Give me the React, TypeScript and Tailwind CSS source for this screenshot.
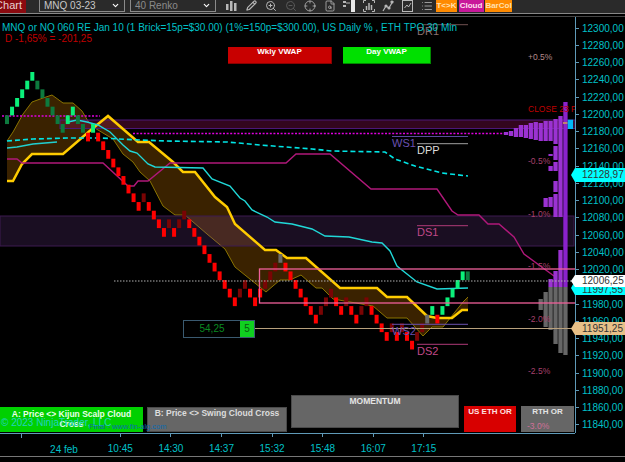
import { ChevronDown, Pencil, ZoomIn, ZoomOut, Crosshair, FileSearch, List } from "lucide-react";

// one entry per renko brick: level, kind (b bright green, d dim green, r red, m dim red, g gray)
const bricks =
  "5d 4b 3b 2b 1b 0b 1d 2d 3d 4d 5d 6d 5b 4b 5d 6d 7r 6b 7r 8r 9r 10r 11r 12r 13r 14r 15r 14m 15r 16r 17r 18r 17m 18r 17m 16m 17r 18r 19r 20r 21r 22r 23r 24r 25r 26r 25m 24m 25r 26r 25r 24m 23m 22m 21g 22r 23r 24r 25r 26r 27r 28r 27m 26m 25m 26r 27r 26m 27r 28r 27m 26m 27r 28r 29r 30r 29m 30r 29m 30r 31r 30m 29m 28g 27b 28r 27b 26b 25b 24b 23b 23d".split(
    " "
  );

const brickColors: Record<string, string> = {
  b: "#0bf07a",
  d: "#0d7a3e",
  r: "#ff0000",
  m: "#7a0404",
  g: "#6a6a6a",
};

const thinCloud = "7,142 13,133 23,115 32,103 43,99 52,96 63,104 73,104 82,112 88,122 93,128 113,140 123,155 133,163 140,173 150,182 163,207 175,216 185,216 207,235 225,250 235,268 266,293 280,281 290,281 301,276 316,289 322,289 333,300 373,307 387,319 407,319 423,337 432,328 443,328 463,303 468,298";
const thickCloud = "7,182 13,182 22,165 32,155 63,155 92,130 108,117 138,143 149,143 173,163 183,173 195,173 215,198 227,208 235,225 265,251 276,251 287,259 306,259 340,289 377,289 387,298 407,298 427,317 437,319 452,319 462,311 468,311";
const cloudFill = thinCloud + " " + thickCloud.split(" ").reverse().join(" ");

const cyanA = "7,149 17,148 33,145 57,143";
const cyanB = "68,123 77,121 87,123 98,126 110,133 123,146 130,152 137,154 148,165 155,168 203,169 212,180 230,187 240,199 245,202 252,211 267,218 275,223 292,225 312,230 325,237 349,238 372,243 382,244 390,252 397,267 417,283 437,290 468,289";
const cyanDash = "7,142 33,140 67,139 100,139 140,141 167,142 227,143 260,146 312,150 332,152 385,153 395,160 415,167 442,174 468,177";
const magenta = "7,160 17,160 22,164 103,164 128,187 134,187 138,182 148,182 170,164 286,164 296,155 330,155 371,190 437,190 452,212 458,216 479,216 488,225 499,225 514,238 524,255 554,277";

// profile columns, k counted from the right edge, each with its y ranges
const purpleCols: [number, number, number][] = [
  [0, 103, 288], [1, 117, 218], [1, 251, 288], [2, 120, 145], [2, 147, 161], [2, 163, 172], [2, 182, 193], [2, 195, 218], [2, 272, 288],
  [3, 122, 142], [3, 155, 157], [3, 167, 172], [3, 198, 208], [3, 280, 288], [4, 122, 142], [4, 199, 208], [5, 124, 142], [6, 123, 141],
  [7, 124, 140], [8, 126, 139], [9, 126, 138], [10, 129, 138], [11, 132, 137], [12, 133, 136],
];
const grayCols: [number, number, number][] = [
  [0, 288, 356], [1, 288, 354], [2, 288, 345], [3, 288, 331], [4, 293, 328], [5, 300, 311],
];

const pctLabels: [string, number, string][] = [
  ["+0.5%", 61, "#b58a8a"],
  ["-0.5%", 165, "#a8406c"],
  ["-1.0%", 218, "#a8406c"],
  ["-1.5%", 270, "#a8406c"],
  ["-2.0%", 323, "#a8406c"],
  ["-2.5%", 375, "#a8406c"],
];

const prices = ["12300,00", "12280,00", "12260,00", "12240,00", "12220,00", "12200,00", "12180,00", "12160,00", "12140,00", "12120,00", "12100,00", "12080,00", "12060,00", "12040,00", "12020,00", "12000,00", "11980,00", "11960,00", "11940,00", "11920,00", "11900,00", "11880,00", "11860,00", "11840,00"];

const times = ["14:30", "14:37", "15:32", "15:48", "16:07", "17:15"];

function ChartDrawing() {
  return (
    <svg className="absolute inset-0" width={575} height={416} viewBox="0 18 575 416">
      <polygon points={cloudFill} fill="#3a2200" />
      <polyline points={thinCloud} fill="none" stroke="#8a7400" strokeWidth={1} />

      <rect x={60} y={121} width={515} height={8.5} fill="#80104a" fillOpacity={0.4} stroke="#4c1878" />
      <rect x={0} y={217} width={574} height={30} fill="#8246aa" fillOpacity={0.2} stroke="#3d1a50" />

      <line x1={2} x2={100} y1={117} y2={117} stroke="#e000e0" strokeWidth={1.5} strokeDasharray="2 1.6" />
      <line x1={133} x2={505} y1={134.5} y2={134.5} stroke="#e000e0" strokeWidth={1.5} strokeDasharray="2 1.6" />

      <polyline points={thickCloud} fill="none" stroke="#ffcc00" strokeWidth={2.5} />
      <polyline points={magenta} fill="none" stroke="#b0187a" strokeWidth={1.4} />
      <polyline points={cyanA} fill="none" stroke="#20d0d0" strokeWidth={1.4} />
      <polyline points={cyanB} fill="none" stroke="#20d8d8" strokeWidth={1.4} />
      <polyline points={cyanDash} fill="none" stroke="#00e5e5" strokeWidth={1.6} strokeDasharray="5 3" />

      {bricks.map((b, i) => {
        const level = parseInt(b);
        const kind = b[b.length - 1];
        return (
          <rect key={i} x={5 + 5.063 * i} y={73 + 8.67 * level} width={4} height={8.7} fill={brickColors[kind]} />
        );
      })}

      {purpleCols.map(([k, y1, y2], i) => (
        <rect key={i} x={563.3 - 4.95 * k} y={y1} width={4.3} height={y2 - y1} fill={k === 0 ? "#8a22cc" : "#9b32d2"} />
      ))}
      {grayCols.map(([k, y1, y2], i) => (
        <rect key={i} x={563.3 - 4.95 * k} y={y1} width={4.3} height={y2 - y1} fill="#666666" />
      ))}
      <rect x={563} y={123} width={4.5} height={2} fill="#c08070" />
      <rect x={567.7} y={120.7} width={5.4} height={9.3} fill="#00b8f8" />

      <rect x={259.5} y={270} width={320} height={34} fill="none" stroke="#f0609a" strokeWidth={1.3} />
      <line x1={114} x2={575} y1={282} y2={282} stroke="#b0b0b0" strokeDasharray="1.5 1.5" />
      <line x1={255} x2={575} y1={329.5} y2={329.5} stroke="#b8a07c" />

      <line x1={422} x2={468} y1={25.7} y2={25.7} stroke="#705050" />
      <line x1={392} x2={468} y1={137.5} y2={137.5} stroke="#5a4aa0" />
      <line x1={417} x2={468} y1={144.7} y2={144.7} stroke="#a0a0a0" />
      <line x1={417} x2={468} y1={226.7} y2={226.7} stroke="#b03a78" />
      <line x1={392} x2={468} y1={325.3} y2={325.3} stroke="#6a50b0" />
      <line x1={417} x2={468} y1={345.3} y2={345.3} stroke="#b03a78" />

      <g fontSize={11}>
        <text x={417} y={36} fill="#8a7070">DR1</text>
        <text x={392} y={148} fill="#6a50b0">WS1</text>
        <text x={417} y={155} fill="#dddddd">DPP</text>
        <text x={417} y={237} fill="#c04888">DS1</text>
        <text x={392} y={336} fill="#6a50b0">WS2</text>
        <text x={417} y={356} fill="#c04888">DS2</text>
      </g>
      <g fontSize={8.5}>
        {pctLabels.map(([t, y, c]) => (
          <text key={t} x={528} y={y} fill={c}>{t}</text>
        ))}
        <text x={528} y={113} fill="#c00000">CLOSE 23 Feb</text>
      </g>
    </svg>
  );
}

function ToolIcon({ children }: { children: React.ReactNode }) {
  return <div className="flex h-[13px] w-[19.5px] shrink-0 items-start justify-start overflow-hidden text-[#b8b8b8]">{children}</div>;
}

function Toolbar() {
  return (
    <div className="flex h-[13px] shrink-0 items-start overflow-hidden bg-[#2a2a2a]">
      <div className="flex h-[13px] w-[26px] shrink-0 justify-end overflow-hidden whitespace-nowrap bg-[#8a0a10] pr-[4px] text-[11px] leading-[11px] text-[#e8d0d0]">Chart</div>
      <div className="ml-[13px] flex h-[12px] w-[86px] shrink-0 items-center justify-between border-x border-b border-[#8a8a8a] pl-1 pr-1 text-[10px] text-[#c8c8c8]">
        MNQ 03-23
        <ChevronDown size={9} strokeWidth={3} className="text-white" />
      </div>
      <div className="ml-[5px] flex h-[12px] w-[86px] shrink-0 items-center justify-between border-x border-b border-[#8a8a8a] pl-1 pr-1 text-[10px] text-[#8a8a8a]">
        40 Renko
        <ChevronDown size={9} strokeWidth={3} className="text-white" />
      </div>
      <div className="ml-[10px] flex">
        <ToolIcon>
          <svg width="11" height="12" viewBox="0 0 11 12" fill="currentColor">
            <rect x="0" y="4" width="2.5" height="6" />
            <rect x="4" y="1" width="2.5" height="10" />
            <rect x="8" y="3" width="2.5" height="8" />
          </svg>
        </ToolIcon>
        <ToolIcon><Pencil size={11} strokeWidth={2.5} /></ToolIcon>
        <ToolIcon><ZoomIn size={12} strokeWidth={2} /></ToolIcon>
        <ToolIcon><ZoomOut size={12} strokeWidth={2} className="text-[#5a5a5a]" /></ToolIcon>
        <ToolIcon><Crosshair size={12} strokeWidth={1.6} /></ToolIcon>
        <ToolIcon><FileSearch size={12} strokeWidth={1.6} /></ToolIcon>
        <ToolIcon>
          <svg width="12" height="12" viewBox="0 0 12 12" fill="currentColor">
            <rect x="0" y="1" width="3" height="2" />
            <rect x="0" y="5" width="3" height="2" />
            <rect x="3" y="2.5" width="4" height="1" />
            <rect x="8" y="0" width="4" height="12" fill="#e8e8e8" />
          </svg>
        </ToolIcon>
        <ToolIcon>
          <svg width="12" height="12" viewBox="0 0 12 12" fill="none" stroke="currentColor">
            <path d="M.5 3V.5H3M9 .5h2.5V3M.5 9v2.5H3M9 11.5h2.5V9" />
            <path d="M3.5 10V6M6 10V3M8.5 10V5" strokeWidth="1.5" />
          </svg>
        </ToolIcon>
        <ToolIcon>
          <svg width="12" height="12" viewBox="0 0 12 12" fill="none" stroke="currentColor" strokeWidth="1.2">
            <path d="M1 11 4 6l3 2 4-7" />
            <circle cx="4" cy="6" r="1" fill="currentColor" />
            <circle cx="7" cy="8" r="1" fill="currentColor" />
            <circle cx="10" cy="2" r="1" fill="currentColor" />
          </svg>
        </ToolIcon>
        <ToolIcon>
          <svg width="11" height="12" viewBox="0 0 11 12" fill="none" stroke="currentColor">
            <rect x=".5" y=".5" width="10" height="11" />
            <path d="M2.5 8 5 5l1.5 2L9 3" />
          </svg>
        </ToolIcon>
        <ToolIcon><List size={12} strokeWidth={1.6} /></ToolIcon>
      </div>
      <div className="ml-[-4.5px] flex h-[12px] gap-[1.5px] text-[8px] font-bold leading-[12px]">
        <div className="w-[21px] bg-[#ff8a00] text-center text-[#ffe0b0]">T&lt;&gt;K</div>
        <div className="w-[25px] bg-[#c8189a] text-center text-[#ffe0f0]">Cloud</div>
        <div className="w-[27px] bg-[#ff8a00] text-center text-[#ffe0b0]">BarCol</div>
      </div>
    </div>
  );
}

function ChartPanel() {
  return (
    <div className="relative h-[416px] w-[575px] shrink-0 overflow-hidden">
      <ChartDrawing />

      <div className="absolute left-[2px] top-[6px] flex flex-col gap-[1px] whitespace-nowrap text-[10px] leading-[10px]">
        <span className="text-[#00c0c8]">MNQ or NQ 060 RE Jan 10 (1 Brick=15p=$30.00) (1%=150p=$300.00), US Daily % , ETH TPO 30 Min</span>
        <span className="pl-[3px] text-[#c00000]">D -1,65% = -201,25</span>
      </div>

      <div className="absolute left-[228px] top-[30px] h-[17px] w-[104px] border-b border-r border-[#8a0000] bg-[#c80000] text-center text-[8px] font-bold leading-[10px] text-white">Wkly VWAP</div>
      <div className="absolute left-[343px] top-[30px] h-[17px] w-[88px] border-b border-r border-[#008a00] bg-[#00e000] text-center text-[8px] font-bold leading-[10px] text-white">Day VWAP</div>

      <div className="absolute left-[183px] top-[303px] flex h-[18px] w-[72px] border border-[#3a5a70]">
        <div className="flex-1 text-center text-[10px] leading-[16px] text-[#0a8a20]">54,25</div>
        <div className="w-[14px] bg-[#10d020] text-center text-[10px] leading-[16px] text-[#0a5a10]">5</div>
      </div>

      <div className="absolute left-0 top-[390px] h-[25px] w-[143px] bg-[#00d000] px-2 pt-[1.5px] text-center text-[8.5px] font-bold leading-[10.5px] text-[#e8ffe8]">A: Price &lt;&gt; Kijun Scalp Cloud Cross</div>
      <div className="absolute left-[147px] top-[390px] h-[25px] w-[140px] border border-[#4a4a4a] bg-[#666666] text-center text-[8.5px] font-bold leading-[10px] text-[#dddddd]">B: Price &lt;&gt; Swing Cloud Cross</div>
      <div className="absolute left-[291px] top-[378px] h-[33px] w-[168px] border border-[#4a4a4a] bg-[#666666] text-center text-[8.5px] font-bold leading-[10px] text-[#e4e4e4]">MOMENTUM</div>
      <div className="absolute left-[464px] top-[389px] h-[26px] w-[52px] bg-[#d80000] pt-[1px] text-center text-[8px] font-bold leading-[10px] text-[#ffe0e0]">US ETH OR</div>
      <div className="absolute left-[521px] top-[389px] h-[26px] w-[53px] bg-[#666666] pt-[1px] text-center text-[8px] font-bold leading-[10px] text-[#e4e4e4]">
        RTH OR
        <div className="pl-[6px] pt-[4px] text-left text-[8.5px] font-normal text-[#d07098]">-3.0%</div>
      </div>

      <div className="absolute left-[1px] top-[400px] text-[10px] leading-[12px] text-[#20d0c0]">© 2023 NinjaTrader, LLC</div>
      <div className="absolute left-[89px] top-[405px] text-[7.5px] leading-[9px] text-[#0a6ab0]">Final - www.fin-alg.com</div>
    </div>
  );
}

function PriceAxis() {
  return (
    <div className="flex h-[416px] flex-1 flex-col border-l border-[#5f9ab8] pt-[2.4px]">
      {prices.map((p) => (
        <div key={p} className="flex h-[17.25px] shrink-0 items-center text-[10px] text-[#00c0c8]">
          <span className="mr-[3px] h-px w-[3px] bg-[#5f9ab8]" />
          {p}
        </div>
      ))}
    </div>
  );
}

function PriceTag({ value, className }: { value: string; className: string }) {
  return (
    <div className={`absolute right-0 w-[54px] pl-[11px] text-[10px] text-[#333333] [clip-path:polygon(4px_0,100%_0,100%_100%,4px_100%,0_50%)] ${className}`}>
      {value}
    </div>
  );
}

function TimeAxis() {
  return (
    <div className="flex h-[23px] w-[575px] shrink-0 border-t border-[#5f9ab8] text-[10px] text-[#00c0c8]">
      <div className="ml-[21px] h-[4px] w-px bg-[#5f9ab8]" />
      <div className="ml-[17px] w-[50px] pt-[8px] text-center">24 feb</div>
      <div className="ml-[6px] flex w-[50.6px] flex-col items-center">
        <span className="h-[4px] w-px bg-[#5f9ab8]" />
        <span className="pt-[4px]">10:45</span>
      </div>
      {times.map((t) => (
        <div key={t} className="flex w-[50.6px] flex-col items-center">
          <span className="h-[4px] w-px bg-[#5f9ab8]" />
          <span className="pt-[4px]">{t}</span>
        </div>
      ))}
    </div>
  );
}

export default function App() {
  return (
    <div className="flex h-[462px] w-[625px] flex-col overflow-hidden bg-black font-['Liberation_Sans',sans-serif]">
      <Toolbar />
      <div className="h-[4px] shrink-0 border-b border-b-[#444444] border-t border-t-[#888888]" />
      <div className="relative flex shrink-0">
        <ChartPanel />
        <PriceAxis />
        <PriceTag value="12128,97" className="top-[151px] h-[14px] bg-[#00ffff] leading-[14px]" />
        <PriceTag value="11997,55" className="top-[264px] h-[14px] bg-[#00ffff] leading-[17px]" />
        <PriceTag value="12006,25" className="top-[258px] h-[12px] bg-white leading-[12px]" />
        <PriceTag value="11951,25" className="top-[305px] h-[13px] bg-[#e8c088] leading-[13px]" />
      </div>
      <TimeAxis />
      <div className="h-px w-full shrink-0 bg-[#777777]" />
    </div>
  );
}
